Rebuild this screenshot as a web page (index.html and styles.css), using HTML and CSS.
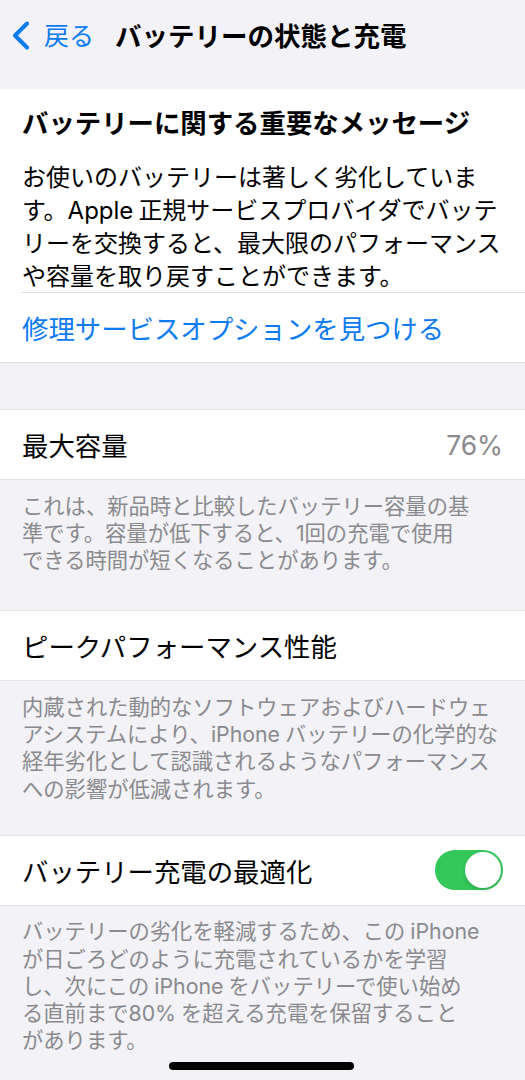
FILE: index.html
```html
<!DOCTYPE html>
<html lang="ja">
<head>
<meta charset="utf-8">
<title>バッテリーの状態と充電</title>
<link rel="stylesheet" href="styles.css">
</head>
<body>
<div class="screen">
  <header class="nav">
    <svg class="chev" width="20" height="30" viewBox="0 0 20 30">
      <path d="M16 2.5 L4 14.5 L16 26.5" fill="none" stroke="#0b7bf2" stroke-width="4" stroke-linecap="round" stroke-linejoin="round"/>
    </svg>
    <span class="back">戻る</span>
    <span class="nav-title">バッテリーの状態と充電</span>
  </header>

  <section class="card msg">
    <div class="msg-title">バッテリーに関する重要なメッセージ</div>
    <div class="msg-body">お使いのバッテリーは著しく劣化していま<br>す。<span class="lat r">Apple</span>正規サービスプロバイダでバッテ<br>リーを交換すると、最大限のパフォーマンス<br>や容量を取り戻すことができます。</div>
    <div class="sep"></div>
    <div class="row link">修理サービスオプションを見つける</div>
  </section>

  <section class="card first">
    <div class="row"><span class="label">最大容量</span><span class="value">76%</span></div>
  </section>
  <p class="footer">これは、新品時と比較したバッテリー容量の基<br>準です。容量が低下すると、1回の充電で使用<br>できる時間が短くなることがあります。</p>

  <section class="card">
    <div class="row"><span class="label">ピークパフォーマンス性能</span></div>
  </section>
  <p class="footer tight">内蔵された動的なソフトウェアおよびハードウェ<br>アシステムにより、<span class="lat r">iPhone</span>バッテリーの化学的な<br>経年劣化として認識されるようなパフォーマンス<br>への影響が低減されます。</p>

  <section class="card">
    <div class="row"><span class="label">バッテリー充電の最適化</span><span class="toggle"><span class="knob"></span></span></div>
  </section>
  <p class="footer">バッテリーの劣化を軽減するため、この<span class="lat l">iPhone</span><br>が日ごろどのように充電されているかを学習<br>し、次にこの<span class="lat l r">iPhone</span>をバッテリーで使い始め<br>る直前まで<span class="lat r">80%</span>を超える充電を保留すること<br>があります。</p>

  <div class="home"></div>
</div>
</body>
</html>
```

FILE: styles.css
```css
* { box-sizing: border-box; }
html, body { margin: 0; padding: 0; }
body {
  background: #f2f2f7;
  font-family: "Inter", "Noto Sans CJK JP", sans-serif;
  color: #000;
}
.screen {
  position: relative;
  width: 525px;
  height: 1080px;
  overflow: hidden;
  background: #f2f2f7;
}
.nav {
  height: 89px;
  display: flex;
  align-items: center;
  padding-left: 11px;
  padding-bottom: 18px;
}
.chev { display: block; flex: none; }
.back {
  margin-left: 13px;
  font-size: 25px;
  line-height: 34px;
  color: #0b7bf2;
}
.nav-title {
  margin-left: 21px;
  font-size: 26.5px;
  font-weight: 700;
  line-height: 34px;
}
.card {
  background: #fff;
  border-top: 1px solid #e3e3e8;
  border-bottom: 1px solid #e3e3e8;
}
.msg {
  padding-top: 17px;
  margin-bottom: 46px;
  border-top: none;
}
.msg-title {
  padding: 0 22px;
  font-size: 26.4px;
  font-weight: 700;
  line-height: 34px;
  margin-bottom: 21px;
}
.msg-body {
  padding: 0 10px 0 22px;
  font-size: 24px;
  line-height: 33px;
  white-space: nowrap;
  margin-bottom: -1px;
}
.sep {
  position: relative;
  height: 1px;
  background: #dcdce0;
  margin-left: 22px;
}
.row {
  height: 69px;
  display: flex;
  align-items: center;
  justify-content: space-between;
  padding: 0 22px;
  font-size: 26.4px;
}
.link { color: #0b7bf2; }
.value { color: #8a8a8e; }
.footer {
  margin: 0 0 36px;
  padding: 12.5px 10px 0 22px;
  font-size: 21.3px;
  line-height: 27.25px;
  color: #8a8a8e;
  white-space: nowrap;
}
.footer.tight { margin-bottom: 32px; }
.lat.l { margin-left: 5px; }
.lat.r { margin-right: 5px; }
.toggle {
  position: relative;
  width: 68px;
  height: 40px;
  border-radius: 20px;
  background: #34c759;
  flex: none;
}
.knob {
  position: absolute;
  top: 2px;
  right: 2px;
  width: 36px;
  height: 36px;
  border-radius: 50%;
  background: #fff;
  box-shadow: 0 2px 4px rgba(0,0,0,0.15);
}
.home {
  position: absolute;
  left: 169px;
  top: 1062px;
  width: 185px;
  height: 8px;
  border-radius: 4px;
  background: #000;
}
```
